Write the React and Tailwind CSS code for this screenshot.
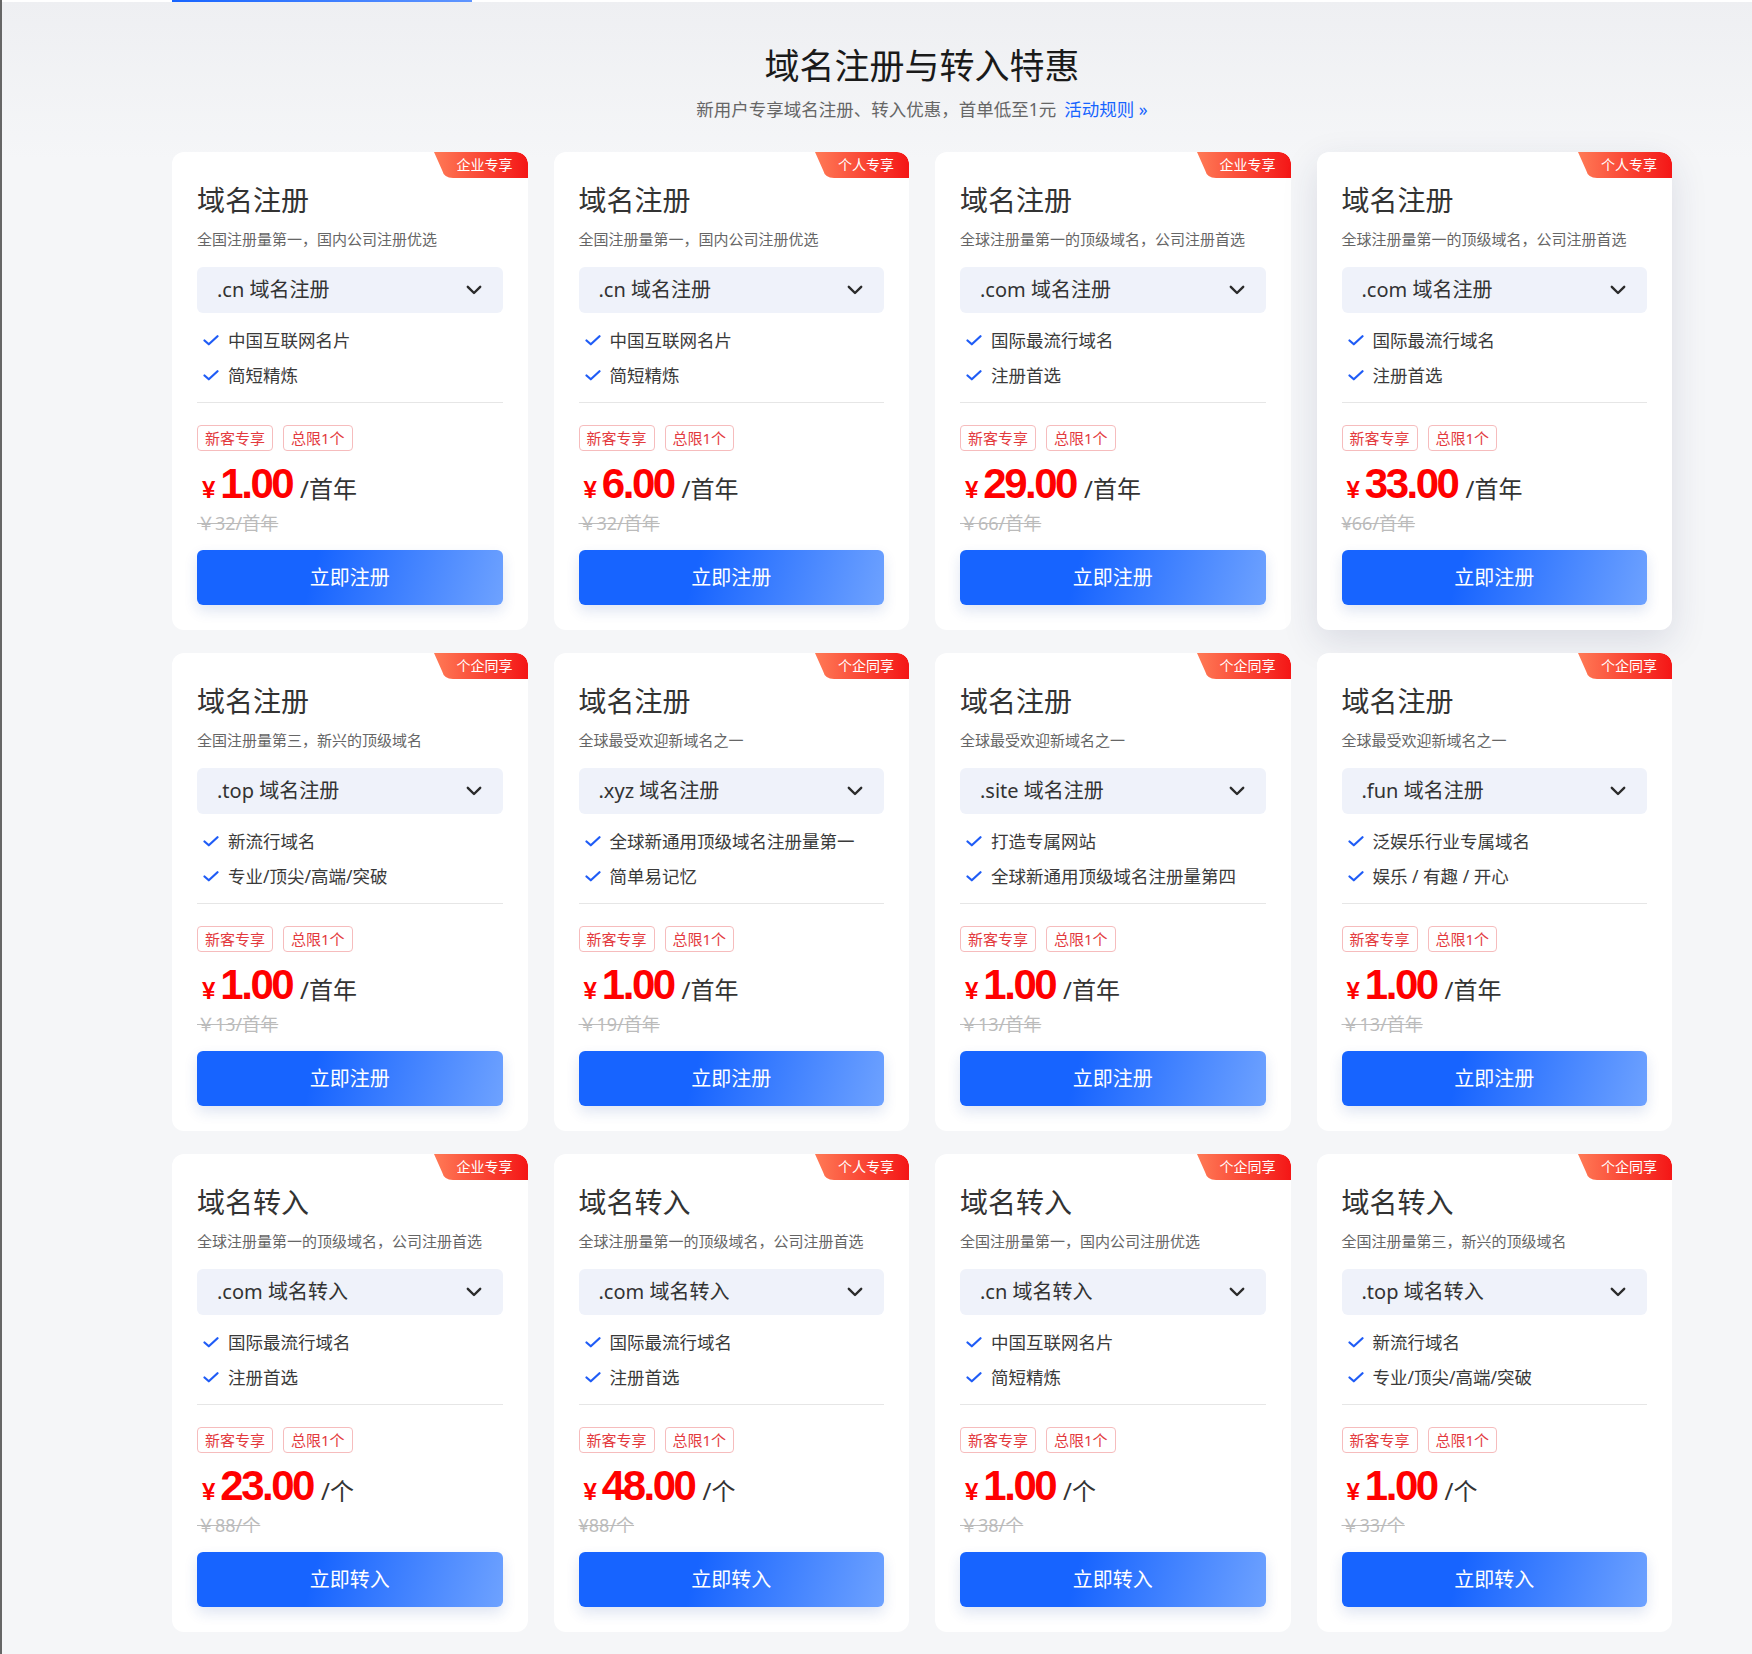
const cards = [
  {
    badge: "企业专享",
    title: "域名注册",
    desc: "全国注册量第一，国内公司注册优选",
    select: ".cn 域名注册",
    features: ["中国互联网名片", "简短精炼"],
    price: "1.00",
    unit: "/首年",
    old: "￥32/首年",
    action: "立即注册",
  },
  {
    badge: "个人专享",
    title: "域名注册",
    desc: "全国注册量第一，国内公司注册优选",
    select: ".cn 域名注册",
    features: ["中国互联网名片", "简短精炼"],
    price: "6.00",
    unit: "/首年",
    old: "￥32/首年",
    action: "立即注册",
  },
  {
    badge: "企业专享",
    title: "域名注册",
    desc: "全球注册量第一的顶级域名，公司注册首选",
    select: ".com 域名注册",
    features: ["国际最流行域名", "注册首选"],
    price: "29.00",
    unit: "/首年",
    old: "￥66/首年",
    action: "立即注册",
  },
  {
    badge: "个人专享",
    title: "域名注册",
    desc: "全球注册量第一的顶级域名，公司注册首选",
    select: ".com 域名注册",
    features: ["国际最流行域名", "注册首选"],
    price: "33.00",
    unit: "/首年",
    old: "¥66/首年",
    action: "立即注册",
    hover: true,
  },
  {
    badge: "个企同享",
    title: "域名注册",
    desc: "全国注册量第三，新兴的顶级域名",
    select: ".top 域名注册",
    features: ["新流行域名", "专业/顶尖/高端/突破"],
    price: "1.00",
    unit: "/首年",
    old: "￥13/首年",
    action: "立即注册",
  },
  {
    badge: "个企同享",
    title: "域名注册",
    desc: "全球最受欢迎新域名之一",
    select: ".xyz 域名注册",
    features: ["全球新通用顶级域名注册量第一", "简单易记忆"],
    price: "1.00",
    unit: "/首年",
    old: "￥19/首年",
    action: "立即注册",
  },
  {
    badge: "个企同享",
    title: "域名注册",
    desc: "全球最受欢迎新域名之一",
    select: ".site 域名注册",
    features: ["打造专属网站", "全球新通用顶级域名注册量第四"],
    price: "1.00",
    unit: "/首年",
    old: "￥13/首年",
    action: "立即注册",
  },
  {
    badge: "个企同享",
    title: "域名注册",
    desc: "全球最受欢迎新域名之一",
    select: ".fun 域名注册",
    features: ["泛娱乐行业专属域名", "娱乐 / 有趣 / 开心"],
    price: "1.00",
    unit: "/首年",
    old: "￥13/首年",
    action: "立即注册",
  },
  {
    badge: "企业专享",
    title: "域名转入",
    desc: "全球注册量第一的顶级域名，公司注册首选",
    select: ".com 域名转入",
    features: ["国际最流行域名", "注册首选"],
    price: "23.00",
    unit: "/个",
    old: "￥88/个",
    action: "立即转入",
  },
  {
    badge: "个人专享",
    title: "域名转入",
    desc: "全球注册量第一的顶级域名，公司注册首选",
    select: ".com 域名转入",
    features: ["国际最流行域名", "注册首选"],
    price: "48.00",
    unit: "/个",
    old: "¥88/个",
    action: "立即转入",
  },
  {
    badge: "个企同享",
    title: "域名转入",
    desc: "全国注册量第一，国内公司注册优选",
    select: ".cn 域名转入",
    features: ["中国互联网名片", "简短精炼"],
    price: "1.00",
    unit: "/个",
    old: "￥38/个",
    action: "立即转入",
  },
  {
    badge: "个企同享",
    title: "域名转入",
    desc: "全国注册量第三，新兴的顶级域名",
    select: ".top 域名转入",
    features: ["新流行域名", "专业/顶尖/高端/突破"],
    price: "1.00",
    unit: "/个",
    old: "￥33/个",
    action: "立即转入",
  },
];

const Badge = ({ text }) => (
  <div className="absolute top-0 right-0 w-[94px] h-[26px]">
    <svg width="94" height="26" viewBox="0 0 94 26" className="absolute inset-0">
      <defs>
        <linearGradient id="badgeGrad" x1="0" y1="0" x2="1" y2="0">
          <stop offset="0" stopColor="#ff7a56" />
          <stop offset="1" stopColor="#f41616" />
        </linearGradient>
      </defs>
      <path d="M0 0 H82 A12 12 0 0 1 94 12 V26 H19 Q10 26 8 18 Z" fill="url(#badgeGrad)" />
    </svg>
    <span className="relative flex h-full items-center justify-center pl-[8px] text-[14px] leading-none text-white">
      {text}
    </span>
  </div>
);

const Check = () => (
  <svg width="16" height="11" viewBox="0 0 16 11" fill="none" className="shrink-0">
    <path d="M1.5 5.5 L5.8 9.3 L14.5 1.2" stroke="#1f5cf6" strokeWidth="2.2" strokeLinecap="round" strokeLinejoin="round" />
  </svg>
);

const Chevron = () => (
  <svg width="16" height="10" viewBox="0 0 16 10" fill="none">
    <path d="M1.8 1.8 L8 8 L14.2 1.8" stroke="#2b2b2b" strokeWidth="2.4" strokeLinecap="round" strokeLinejoin="round" />
  </svg>
);

const Card = ({ card }) => (
  <div
    className={`relative flex flex-col overflow-hidden rounded-[12px] bg-white px-[25px] pt-[34px] pb-[25px] ${
      card.hover ? "shadow-[0_12px_36px_rgba(40,50,90,0.13)]" : ""
    }`}
  >
    <Badge text={card.badge} />
    <h3 className="text-[28px] leading-[28px] text-[#333]">{card.title}</h3>
    <p className="mt-[18px] text-[15px] leading-[15px] text-[#666]">{card.desc}</p>
    <div className="mt-[20px] flex h-[46px] items-center justify-between rounded-[6px] bg-[#eff2fa] pl-[20px] pr-[21px]">
      <span className="text-[20px] leading-none text-[#333]">{card.select}</span>
      <Chevron />
    </div>
    <ul className="mt-[10px]">
      {card.features.map((f) => (
        <li key={f} className="flex h-[35px] items-center gap-[9px] pl-[6px] text-[17.5px] text-[#3a3a3a]">
          <Check />
          <span className="whitespace-nowrap">{f}</span>
        </li>
      ))}
    </ul>
    <div className="mt-[9px] h-px bg-[#e6e6e6]" />
    <div className="mt-[22px] flex gap-[10px]">
      <span className="h-[26px] rounded-[4px] border border-[#f6bcbd] px-[7px] text-[15px] leading-[24px] text-[#e33a3e]">
        新客专享
      </span>
      <span className="h-[26px] rounded-[4px] border border-[#f6bcbd] px-[7px] text-[15px] leading-[24px] text-[#e33a3e]">
        总限1个
      </span>
    </div>
    <div className="mt-[12px] flex h-[40px] items-baseline">
      <span className="ml-[5px] font-['Liberation_Sans',sans-serif] text-[24px] leading-none font-bold text-[#ff0000]">
        ¥
      </span>
      <span className="ml-[5px] font-['Liberation_Sans',sans-serif] text-[42px] leading-none font-bold tracking-[-2.5px] text-[#ff0000]">
        {card.price}
      </span>
      <span className="ml-[8px] text-[24px] leading-none text-[#333]">{card.unit}</span>
    </div>
    <div className="mt-[11px] text-[18px] leading-[18px] text-[#bbb] line-through">{card.old}</div>
    <button className="mt-[18px] h-[55px] rounded-[6px] bg-[linear-gradient(105deg,#1764ff_38%,#6ea2ff_100%)] text-[20px] text-white shadow-[0_6px_14px_rgba(30,70,160,0.14)]">
      {card.action}
    </button>
  </div>
);

export default function App() {
  return (
    <div className="min-h-screen w-full border-l-2 border-[#666] bg-[linear-gradient(180deg,#eeeff2_0px,#f5f6f8_160px)] font-['Noto_Sans','Noto_Sans_CJK_SC',sans-serif]">
      <div className="h-[2px] bg-white">
        <div className="ml-[170px] h-full w-[300px] bg-[linear-gradient(90deg,#1764ff,#5f95ff)]" />
      </div>
      <div className="ml-[170px] w-[1500px] pb-[22px]">
        <h1 className="mt-[46px] text-center text-[35px] leading-[35px] text-[#1a1a1a]">域名注册与转入特惠</h1>
        <p className="mt-[18px] text-center text-[17.5px] leading-[17px] text-[#666]">
          新用户专享域名注册、转入优惠，首单低至1元
          <a className="ml-[8px] text-[#1764ff]">活动规则 »</a>
        </p>
        <div className="mt-[34px] grid grid-cols-4 gap-x-[26px] gap-y-[23px]">
          {cards.map((c, i) => (
            <Card key={i} card={c} />
          ))}
        </div>
      </div>
    </div>
  );
}
